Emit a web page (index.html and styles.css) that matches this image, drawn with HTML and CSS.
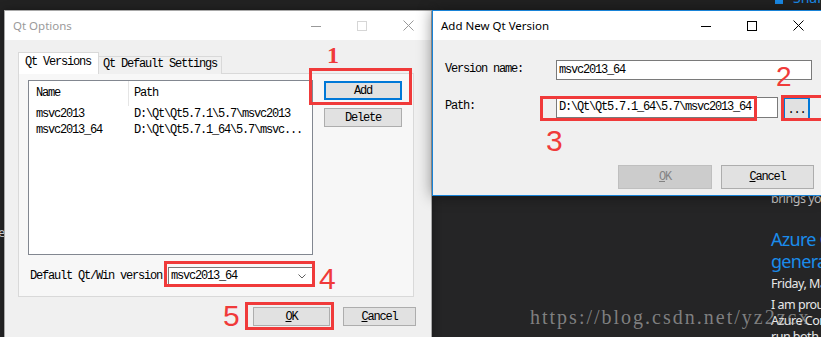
FILE: index.html
```html
<!DOCTYPE html>
<html lang="en">
<head>
    <meta charset="UTF-8">
    <meta name="viewport" content="width=device-width, initial-scale=1.0">
    <title>Qt Options</title>
    <link rel="stylesheet" href="styles.css">
</head>
<body>
<div class="desktop">

    <span class="edge-text">e</span>
    <div class="share"><span class="share-icon"></span>Share</div>

    <!-- page behind the dialogs -->
    <div class="blog">
        <p class="blog-intro">brings you</p>
        <h2 class="blog-title">Azure Container<br>generally</h2>
        <p class="blog-date">Friday, May</p>
        <p class="blog-text">I am proud<br>Azure Container<br>run both</p>
    </div>

    <div class="window qt-options">
        <div class="titlebar">
            <span class="title">Qt Options</span>
            <div class="caption">
                <span class="cap-btn"><svg width="10" height="10" viewBox="0 0 10 10"><path d="M0 5.5H10" stroke="currentColor"/></svg></span>
                <span class="cap-btn disabled"><svg width="10" height="10" viewBox="0 0 10 10"><rect x="0.5" y="0.5" width="9" height="9" fill="none" stroke="currentColor"/></svg></span>
                <span class="cap-btn"><svg width="11" height="11" viewBox="0 0 11 11"><path d="M0.5 0.5L10.5 10.5M10.5 0.5L0.5 10.5" stroke="currentColor"/></svg></span>
            </div>
        </div>
        <div class="body">
            <div class="tabs">
                <span class="tab selected">Qt Versions</span>
                <span class="tab">Qt Default Settings</span>
            </div>
            <div class="pane">
                <div class="pane-top">
                    <div class="list">
                        <div class="list-head">
                            <span class="col-name">Name</span>
                            <span class="col-path">Path</span>
                        </div>
                        <div class="list-row">
                            <span class="col-name">msvc2013</span>
                            <span class="col-path">D:\Qt\Qt5.7.1\5.7\msvc2013</span>
                        </div>
                        <div class="list-row">
                            <span class="col-name">msvc2013_64</span>
                            <span class="col-path">D:\Qt\Qt5.7.1_64\5.7\msvc...</span>
                        </div>
                    </div>
                    <div class="side-buttons">
                        <button class="btn side focused">Add</button>
                        <button class="btn side">Delete</button>
                    </div>
                </div>
                <div class="pane-bottom">
                    <span class="field-label">Default Qt/Win version</span>
                    <div class="combo">
                        <span>msvc2013_64</span>
                        <svg width="8" height="5" viewBox="0 0 8 5"><path d="M0.5 0.5L4 4L7.5 0.5" fill="none" stroke="#606060"/></svg>
                    </div>
                </div>
            </div>
            <div class="footer">
                <button class="btn ok"><u>O</u>K</button>
                <button class="btn cancel"><u>C</u>ancel</button>
            </div>
        </div>
    </div>

    <div class="window add-version">
        <div class="titlebar">
            <span class="title">Add New Qt Version</span>
            <div class="caption">
                <span class="cap-btn"><svg width="10" height="10" viewBox="0 0 10 10"><path d="M0 5.5H10" stroke="currentColor"/></svg></span>
                <span class="cap-btn"><svg width="10" height="10" viewBox="0 0 10 10"><rect x="0.5" y="0.5" width="9" height="9" fill="none" stroke="currentColor"/></svg></span>
                <span class="cap-btn"><svg width="11" height="11" viewBox="0 0 11 11"><path d="M0.5 0.5L10.5 10.5M10.5 0.5L0.5 10.5" stroke="currentColor"/></svg></span>
            </div>
        </div>
        <div class="body">
            <div class="form">
                <span class="form-label">Version name:</span>
                <div class="input name-input">msvc2013_64</div>
                <span class="form-label">Path:</span>
                <div class="path-field">
                    <div class="input path-input">D:\Qt\Qt5.7.1_64\5.7\msvc2013_64</div>
                    <button class="btn browse focused">...</button>
                </div>
            </div>
            <div class="footer">
                <button class="btn ok" disabled><u>O</u>K</button>
                <button class="btn cancel"><u>C</u>ancel</button>
            </div>
        </div>
    </div>

    <!-- red annotations -->
    <div class="mark-box box-1"></div>
    <div class="mark-box box-2"></div>
    <div class="mark-box box-3"></div>
    <div class="mark-box box-4"></div>
    <div class="mark-box box-5"></div>
    <span class="mark-num num-1">1</span>
    <span class="mark-num num-2">2</span>
    <span class="mark-num num-3">3</span>
    <span class="mark-num num-4">4</span>
    <span class="mark-num num-5">5</span>

    <div class="watermark">https://blog.csdn.net/yz2zcx</div>
</div>
</body>
</html>
```

FILE: styles.css
```css
* {
    box-sizing: border-box;
}
html, body {
    margin: 0;
    padding: 0;
}
body {
    background: #252526;
    overflow: hidden;
}
.desktop {
    position: relative;
    width: 821px;
    height: 337px;
    overflow: hidden;
    background: linear-gradient(#222222 0, #222222 10px, #252526 10px);
}

/* background page */
.edge-text {
    position: absolute;
    left: -2px;
    top: 224px;
    font: 13px/16px "Noto Sans", sans-serif;
    color: #dddddd;
}
.share {
    position: absolute;
    left: 775px;
    top: -10px;
    font: 14px/16px "Noto Sans", sans-serif;
    color: #1a8ceb;
    white-space: nowrap;
}
.share-icon {
    display: inline-block;
    width: 8px;
    height: 14px;
    margin-right: 10px;
    background: #1a8ceb;
    vertical-align: top;
}
.blog {
    position: absolute;
    left: 771px;
    top: 191px;
    width: 200px;
    font-family: "Noto Sans", sans-serif;
    white-space: nowrap;
    letter-spacing: -0.5px;
}
.blog p, .blog h2 {
    margin: 0;
}
.blog-intro {
    font-size: 12.5px;
    line-height: 16px;
    color: #c8c8c8;
}
.blog-title {
    margin-top: 21px !important;
    font-size: 18px;
    line-height: 22px;
    font-weight: normal;
    letter-spacing: -0.7px;
    color: #1a8ceb;
}
.blog-date {
    margin-top: 4px !important;
    font-size: 12.5px;
    line-height: 16px;
    color: #e8e8e8;
}
.blog-text {
    margin-top: 5px !important;
    font-size: 12.5px;
    line-height: 16px;
    color: #e8e8e8;
}

/* windows */
.window {
    position: absolute;
    display: flex;
    flex-direction: column;
    background: #f0f0f0;
    font-family: "Liberation Mono", monospace;
    font-size: 12px;
    letter-spacing: -1.2px;
    color: #000;
}
.qt-options {
    left: 4px;
    top: 10px;
    width: 428px;
    height: 340px;
    border: 1px solid #a8a8a8;
    box-shadow: 0 0 8px rgba(0, 0, 0, 0.35);
}
.add-version {
    left: 432px;
    top: 10px;
    width: 390px;
    height: 186px;
    border: 1px solid #1883d7;
    box-shadow: 0 0 14px rgba(0, 0, 0, 0.45);
}
.titlebar {
    height: 29px;
    flex: none;
    display: flex;
    align-items: center;
    background: #fff;
    font-family: "Noto Sans", sans-serif;
    font-size: 11.5px;
    letter-spacing: 0;
}
.title {
    flex: 1;
    padding-left: 8px;
}
.qt-options .title {
    color: #9a9a9a;
}
.caption {
    display: flex;
    align-self: stretch;
}
.cap-btn {
    width: 46px;
    display: flex;
    align-items: center;
    justify-content: center;
    color: #000;
}
.qt-options .cap-btn {
    color: #999;
}
.qt-options .cap-btn.disabled {
    color: #d6d6d6;
}

/* buttons */
.btn {
    font: inherit;
    letter-spacing: inherit;
    color: #000;
    background: #e1e1e1;
    border: 1px solid #adadad;
    padding: 0;
    height: 19px;
}
.btn.focused {
    border: 2px solid #0078d7;
}
.btn u {
    text-decoration: underline;
}
.btn:disabled {
    background: #cccccc;
    border-color: #bfbfbf;
    color: #838383;
}

/* Qt Options */
.qt-options .body {
    padding: 12px 17px 0 13px;
}
.tabs {
    display: flex;
    align-items: flex-end;
    height: 22px;
    margin-bottom: -1px;
    position: relative;
    z-index: 1;
}
.tab {
    height: 18px;
    line-height: 15px;
    padding: 0 4px;
    margin-left: -1px;
    border: 1px solid #d9d9d9;
    border-bottom: none;
    background: #f0f0f0;
    white-space: nowrap;
}
.tab.selected {
    margin-left: 0;
    width: 81px;
    height: 22px;
    line-height: 18px;
    padding-left: 6px;
    background: #fff;
    position: relative;
    z-index: 1;
}
.pane {
    height: 224px;
    border: 1px solid #d9d9d9;
    background: #f7f7f7;
    padding: 6px 0 0 9px;
}
.pane-top {
    display: flex;
}
.list {
    width: 285px;
    height: 175px;
    border: 1px solid #828790;
    background: #fff;
}
.list-head, .list-row {
    display: flex;
    white-space: nowrap;
}
.list-head {
    height: 25px;
    line-height: 25px;
}
.list-row {
    height: 16px;
    line-height: 16px;
}
.col-name {
    width: 100px;
    padding-left: 7px;
    flex: none;
}
.list-head .col-name {
    border-right: 1px solid #e5e5e5;
}
.col-path {
    padding-left: 5px;
}
.side-buttons {
    display: flex;
    flex-direction: column;
    gap: 8px;
    margin: 1px 0 0 11px;
}
.btn.side {
    width: 78px;
}
.pane-bottom {
    display: flex;
    align-items: center;
    margin-top: 12px;
}
.field-label {
    width: 140px;
    padding-left: 2px;
    white-space: nowrap;
}
.combo {
    width: 145px;
    height: 18px;
    border: 1px solid #7a7a7a;
    background: #fff;
    display: flex;
    align-items: center;
    justify-content: space-between;
    padding: 0 6px 0 2px;
}
.footer {
    display: flex;
    justify-content: flex-end;
}
.qt-options .footer {
    margin: 10px -2px 0 0;
    gap: 13px;
}
.qt-options .ok {
    width: 77px;
}
.qt-options .cancel {
    width: 73px;
}

/* Add New Qt Version */
.add-version .body {
    flex: 1;
    padding: 20px 7px 0 12px;
}
.form {
    display: grid;
    grid-template-columns: 111px 1fr;
    row-gap: 17px;
}
.form-label {
    padding-top: 2px;
    white-space: nowrap;
}
.input {
    height: 20px;
    border: 1px solid #7a7a7a;
    background: #fff;
    padding-left: 2px;
    line-height: 18px;
    white-space: nowrap;
}
.name-input {
    width: 256px;
}
.path-field {
    display: flex;
    gap: 5px;
}
.path-input {
    width: 222px;
    height: 21px;
    line-height: 19px;
}
.btn.browse {
    width: 27px;
    height: 21px;
    line-height: 22px;
}
.add-version .footer {
    margin-top: 44px;
    gap: 9px;
}
.add-version .btn {
    height: 24px;
}
.add-version .ok {
    width: 94px;
}
.add-version .cancel {
    width: 93px;
}

/* annotations */
.mark-box {
    position: absolute;
    border: 3px solid #f03a3a;
}
.box-1 { left: 309px; top: 68px; width: 103px; height: 37px; }
.box-2 { left: 781px; top: 95px; width: 45px; height: 26px; }
.box-3 { left: 540px; top: 96px; width: 217px; height: 25px; }
.box-4 { left: 164px; top: 261px; width: 151px; height: 26px; }
.box-5 { left: 245px; top: 302px; width: 89px; height: 28px; }
.mark-num {
    position: absolute;
    color: #f03a3a;
    font-family: "Liberation Sans", sans-serif;
    font-size: 30px;
    line-height: 30px;
}
.num-1 {
    left: 327px;
    top: 43px;
    font-family: "Liberation Serif", serif;
    font-weight: bold;
    font-size: 24px;
    line-height: 24px;
}
.num-2 { left: 776px; top: 63px; font-size: 28px; line-height: 28px; }
.num-3 { left: 546px; top: 126px; }
.num-4 { left: 319px; top: 264px; }
.num-5 { left: 223px; top: 301px; }

.watermark {
    position: absolute;
    left: 530px;
    top: 307px;
    font-family: "Liberation Serif", serif;
    font-size: 20px;
    line-height: 20px;
    letter-spacing: 2px;
    color: rgba(190, 190, 190, 0.6);
    white-space: nowrap;
}
```
